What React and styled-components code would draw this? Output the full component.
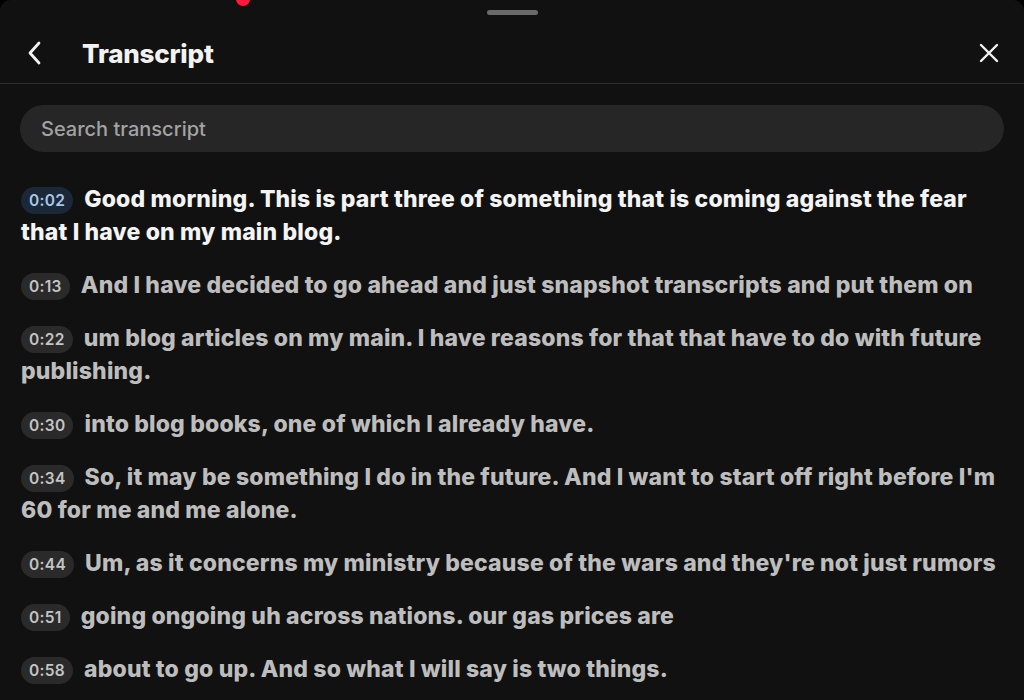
import React from "react";
import styled, { createGlobalStyle } from "styled-components";

const Global = createGlobalStyle`
  html, body { margin: 0; padding: 0; background: #000; }
  body { font-family: Inter, "Noto Sans", "Liberation Sans", sans-serif; }
`;

const Sheet = styled.div`
  position: relative;
  width: 1024px;
  height: 700px;
  background: #111111;
  border-radius: 11px 11px 0 0;
  overflow: hidden;
  display: flex;
  flex-direction: column;
`;

const RecordDot = styled.span`
  position: absolute;
  left: 236px;
  top: -8px;
  width: 14px;
  height: 14px;
  border-radius: 50%;
  background: #ff1a3c;
`;

const Grabber = styled.div`
  align-self: center;
  width: 51px;
  height: 5px;
  margin-top: 10px;
  border-radius: 3px;
  background: #6a6a6a;
`;

const Header = styled.header`
  height: 60px;
  margin-top: 8px;
  display: flex;
  align-items: center;
  padding: 0 24px 0 26px;
  border-bottom: 1px solid #2e2e2e;
`;

const IconButton = styled.button`
  background: none;
  border: 0;
  padding: 0;
  display: flex;
  align-items: center;
  justify-content: center;
  color: #f2f2f2;
`;

const Title = styled.h1`
  margin: 0 0 0 38px;
  flex: 1;
  font-size: 26px;
  font-weight: 800;
  color: #f2f2f2;
  letter-spacing: -0.2px;
`;

const SearchBox = styled.div`
  margin: 21px 20px 0;
  height: 47px;
  border-radius: 24px;
  background: #262626;
  display: flex;
  align-items: center;
  padding: 0 21px;
  font-size: 20px;
  font-weight: 500;
  color: #a3a3a3;
`;

const List = styled.div`
  padding: 31px 12px 0 21px;
  display: flex;
  flex-direction: column;
  gap: 20px;
`;

const Line = styled.p`
  margin: 0;
  font-size: 23px;
  line-height: 33px;
  font-weight: 800;
  color: ${(p) => (p.$active ? "#f4f4f4" : "#bdbdbd")};
  letter-spacing: 0.16px;
`;

const Stamp = styled.span`
  display: inline-block;
  vertical-align: 1px;
  margin-right: 11px;
  padding: 0 8px;
  height: 27px;
  line-height: 27px;
  border-radius: 14px;
  font-size: 15.5px;
  font-weight: 600;
  letter-spacing: 0.3px;
  background: ${(p) => (p.$active ? "#1b2838" : "#2a2a2a")};
  color: ${(p) => (p.$active ? "#a9c6e6" : "#c4c4c4")};
`;

const rows = [
  ["0:02", "Good morning. This is part three of something that is coming against the fear that I have on my main blog.", true],
  ["0:13", "And I have decided to go ahead and just snapshot transcripts and put them on"],
  ["0:22", "um blog articles on my main. I have reasons for that that have to do with future publishing."],
  ["0:30", "into blog books, one of which I already have."],
  ["0:34", "So, it may be something I do in the future. And I want to start off right before I'm 60 for me and me alone."],
  ["0:44", "Um, as it concerns my ministry because of the wars and they're not just rumors"],
  ["0:51", "going ongoing uh across nations. our gas prices are"],
  ["0:58", "about to go up. And so what I will say is two things."],
];

export default function App() {
  return (
    <>
      <Global />
      <Sheet>
        <RecordDot />
        <Grabber />
        <Header>
          <IconButton aria-label="Back">
            <svg width="18" height="26" viewBox="0 0 18 26" fill="none">
              <path d="M13 3 L4 13 L13 23" stroke="currentColor" strokeWidth="2.8" strokeLinecap="round" strokeLinejoin="round" />
            </svg>
          </IconButton>
          <Title>Transcript</Title>
          <IconButton aria-label="Close">
            <svg width="22" height="22" viewBox="0 0 22 22" fill="none">
              <path d="M3 3 L19 19 M19 3 L3 19" stroke="currentColor" strokeWidth="2.4" strokeLinecap="round" />
            </svg>
          </IconButton>
        </Header>
        <SearchBox>Search transcript</SearchBox>
        <List>
          {rows.map(([t, text, active]) => (
            <Line key={t} $active={active}>
              <Stamp $active={active}>{t}</Stamp>
              {text}
            </Line>
          ))}
        </List>
      </Sheet>
    </>
  );
}
